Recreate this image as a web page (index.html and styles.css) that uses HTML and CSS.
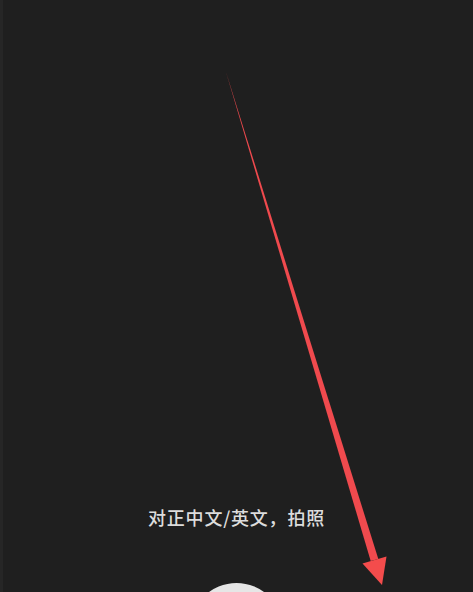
FILE: index.html
```html
<!DOCTYPE html>
<html lang="zh">
<head>
<meta charset="utf-8">
<title>拍照</title>
<link rel="stylesheet" href="styles.css">
</head>
<body>
<div class="screen">
  <p class="caption">对正中文/英文，拍照</p>
  <div class="shutter"></div>
  <svg class="arrow" width="473" height="592" viewBox="0 0 473 592">
    <polygon points="226,72 378.3,558.9 370.7,561.1" fill="#f04a4e"/>
    <polygon points="362.5,563.6 386.5,556.4 382,585" fill="#f44c4c"/>
  </svg>
</div>
</body>
</html>
```
FILE: styles.css
```css
html, body {
  margin: 0;
  padding: 0;
  background: #1f1f1f;
}
.screen {
  position: relative;
  width: 473px;
  height: 592px;
  overflow: hidden;
  background: #1f1f1f;
  display: flex;
  flex-direction: column;
  align-items: center;
  justify-content: flex-end;
  box-shadow: inset 3px 0 0 #262626;
}
.caption {
  margin: 0 0 54px 0;
  font-family: "Noto Sans CJK SC", "Noto Sans", sans-serif;
  font-size: 18px;
  font-weight: 500;
  line-height: 24px;
  color: #dcdcdc;
  letter-spacing: 0.8px;
}
.shutter {
  width: 93px;
  height: 93px;
  border-radius: 50%;
  background: #e6e6e6;
  margin-bottom: -84px;
  flex: none;
}
.arrow {
  position: absolute;
  left: 0;
  top: 0;
  filter: blur(0.4px);
}
```
